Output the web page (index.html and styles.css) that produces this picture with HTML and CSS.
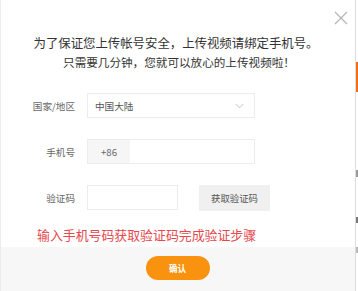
FILE: index.html
```html
<!DOCTYPE html>
<html lang="zh">
<head>
<meta charset="utf-8">
<link rel="stylesheet" href="styles.css">
</head>
<body>
<div class="page">
  <div class="dialog">
    <button class="close" aria-label="关闭">
      <svg width="14" height="14" viewBox="0 0 14 14"><path d="M1 1L13 13M13 1L1 13" stroke="#b3b3b3" stroke-width="1.1" fill="none"/></svg>
    </button>
    <div class="dialog-body">
      <p class="title">为了保证您上传帐号安全，上传视频请绑定手机号。</p>
      <p class="subtitle">只需要几分钟，您就可以放心的上传视频啦！</p>
      <div class="form">
        <div class="row">
          <span class="label">国家/地区</span>
          <div class="select">
            <span>中国大陆</span>
            <svg class="chev" width="9" height="6" viewBox="0 0 9 6"><path d="M0.5 0.8L4.5 4.8L8.5 0.8" stroke="#c4c4c4" stroke-width="1" fill="none"/></svg>
          </div>
        </div>
        <div class="row">
          <span class="label">手机号</span>
          <div class="phone">
            <span class="prefix">+86</span>
            <span class="phone-input"></span>
          </div>
        </div>
        <div class="row">
          <span class="label">验证码</span>
          <span class="code-input"></span>
          <button class="get-code">获取验证码</button>
        </div>
      </div>
      <p class="hint">输入手机号码获取验证码完成验证步骤</p>
    </div>
    <div class="dialog-footer">
      <button class="confirm">确认</button>
    </div>
  </div>
  <div class="behind">
    <span class="bar"></span>
    <span class="mark m1"></span>
    <span class="mark m2"></span>
    <span class="mark m3"></span>
  </div>
</div>
</body>
</html>
```
FILE: styles.css
```css
* { box-sizing: border-box; }
html, body { margin: 0; padding: 0; }
body {
  width: 358px;
  height: 291px;
  overflow: hidden;
  background: #fff;
  font-family: "Noto Sans CJK SC", "Noto Sans", sans-serif;
}
.page {
  display: flex;
  height: 291px;
}
.dialog {
  position: relative;
  width: 356px;
  height: 291px;
  background: #fff;
  border-left: 1px solid #ececec;
  border-right: 1px solid #dcdcdc;
  display: flex;
  flex-direction: column;
}
.close {
  position: absolute;
  top: 11px;
  left: 333px;
  width: 14px;
  height: 14px;
  padding: 0;
  border: 0;
  background: none;
  display: flex;
}
.dialog-body {
  height: 247px;
  padding-top: 34px;
}
.title {
  margin: 0;
  text-align: center;
  font-size: 12.4px;
  line-height: 19px;
  color: #333;
  padding-right: 4px;
}
.subtitle {
  margin: 0;
  text-align: center;
  font-size: 11.6px;
  line-height: 19px;
  color: #333;
  padding-left: 2px;
}
.form {
  margin-top: 21px;
  display: flex;
  flex-direction: column;
  gap: 21px;
}
.row {
  display: flex;
  align-items: center;
  height: 25px;
}
.label {
  width: 74px;
  margin-right: 12px;
  text-align: right;
  font-size: 9.6px;
  color: #666;
}
.select {
  width: 168px;
  height: 25px;
  border: 1px solid #ececec;
  display: flex;
  align-items: center;
  justify-content: space-between;
  padding: 0 10px 0 7px;
  font-size: 9.6px;
  color: #555;
}
.chev { margin-top: 1px; }
.phone {
  width: 168px;
  height: 25px;
  border: 1px solid #ececec;
  display: flex;
}
.prefix {
  width: 42px;
  background: #f6f6f6;
  display: flex;
  align-items: center;
  justify-content: center;
  font-size: 9.6px;
  color: #666;
}
.phone-input { flex: 1; }
.code-input {
  width: 91px;
  height: 25px;
  border: 1px solid #ececec;
}
.get-code {
  margin-left: 21px;
  width: 71px;
  height: 26px;
  border: 0;
  background: #f0f0f0;
  font-family: inherit;
  font-size: 9.4px;
  color: #555;
  padding: 0;
}
.hint {
  margin: 15px 0 0 36px;
  font-size: 12.9px;
  line-height: 20px;
  color: #e5484d;
  letter-spacing: 0;
}
.dialog-footer {
  flex: 1;
  background: #f7f7f7;
  display: flex;
  justify-content: center;
  padding-top: 9px;
  padding-right: 1px;
}
.confirm {
  width: 64px;
  height: 24px;
  border: 0;
  border-radius: 12px;
  background: #f8920f;
  color: #fff;
  font-family: inherit;
  font-size: 8.6px;
  font-weight: bold;
  padding: 0;
}
.behind {
  flex: 1;
  position: relative;
  background: #fff;
}
.bar {
  position: absolute;
  left: 0;
  top: 62px;
  width: 3px;
  height: 30px;
  background: #f26c11;
}
.mark {
  position: absolute;
  left: 0;
  width: 2px;
  background: #9a9a9a;
}
.m1 { top: 170px; height: 7px; }
.m2 { top: 217px; height: 6px; background: #777; }
.m3 { top: 247px; height: 6px; background: #bbb; }
```
